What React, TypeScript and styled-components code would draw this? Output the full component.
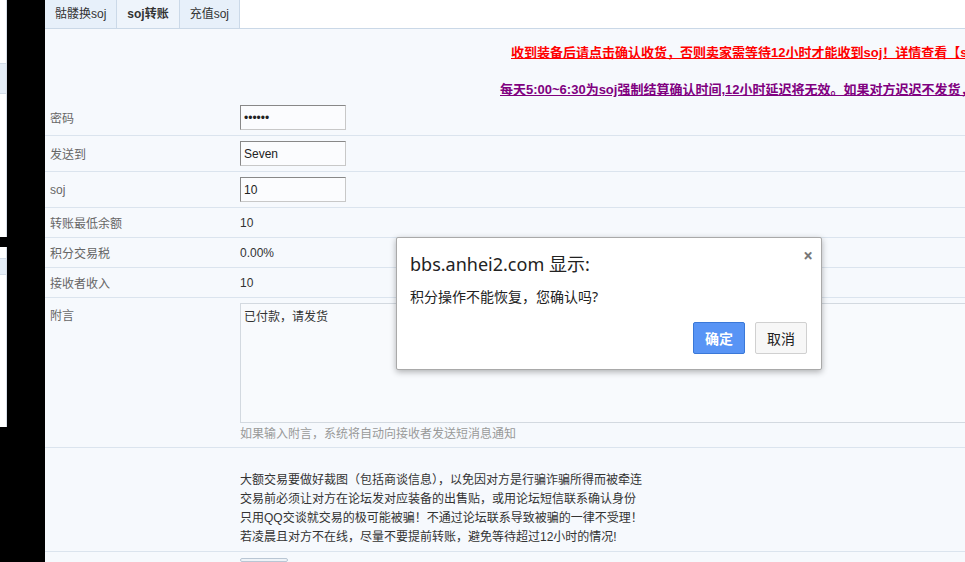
import React from 'react';
import styled, { createGlobalStyle } from 'styled-components';

const GlobalStyle = createGlobalStyle`
	html, body {
		margin: 0;
		padding: 0;
		background: #000;
	}
	body {
		font-family: 'Liberation Sans', 'Noto Sans CJK SC', sans-serif;
		font-size: 12px;
		color: #333;
	}
`;

const Page = styled.div`
	display: flex;
	width: 965px;
	height: 562px;
	overflow: hidden;
	background: #000;
`;

const SideStrip = styled.div`
	display: flex;
	flex-direction: column;
	gap: 10px;
	width: 45px;
	flex-shrink: 0;
	background: #000;
`;

const WindowSliver = styled.div<{ $h: number }>`
	display: flex;
	flex-direction: column;
	width: 7px;
	height: ${(p) => p.$h}px;
	background: #fff;
	border-right: 1px solid #d6dde6;
	box-sizing: border-box;
`;

const SliverBand = styled.div<{ $top: number; $h: number }>`
	margin-top: ${(p) => p.$top}px;
	height: ${(p) => p.$h}px;
	background: #e6eef7;
	border-top: 1px solid #d3dde8;
	border-bottom: 1px solid #d3dde8;
`;

const Main = styled.div`
	position: relative;
	flex: 1;
	display: flex;
	flex-direction: column;
	background: #f6f9fd;
	overflow: hidden;
`;

const TabBar = styled.div`
	display: flex;
	height: 28px;
	background: #fff;
	border-bottom: 1px solid #cad8e7;
	flex-shrink: 0;
`;

const Tab = styled.div<{ $active?: boolean }>`
	padding: 0 10px;
	line-height: 28px;
	background: ${(p) => (p.$active ? '#eef4fb' : '#e7f0fa')};
	border-right: 1px solid #cbd9e8;
	font-weight: ${(p) => (p.$active ? 'bold' : 'normal')};
	color: #333;
	white-space: nowrap;
`;

const NoticeArea = styled.div`
	display: flex;
	flex-direction: column;
	gap: 17px;
	padding-top: 14px;
	flex-shrink: 0;
`;

const Notice = styled.div<{ $color: string; $indent: number }>`
	height: 20px;
	line-height: 20px;
	padding-left: ${(p) => p.$indent}px;
	color: ${(p) => p.$color};
	font-size: 13px;
	font-weight: bold;
	text-decoration: underline;
	white-space: nowrap;
`;

const Row = styled.div<{ $h: number; $top?: boolean }>`
	display: flex;
	align-items: ${(p) => (p.$top ? 'flex-start' : 'center')};
	height: ${(p) => p.$h}px;
	border-bottom: 1px solid #dbe4ee;
	flex-shrink: 0;
	box-sizing: border-box;
`;

const Label = styled.div<{ $padTop?: number }>`
	width: 195px;
	padding-left: 5px;
	padding-top: ${(p) => p.$padTop ?? 0}px;
	box-sizing: border-box;
	color: #666;
	flex-shrink: 0;
`;

const Value = styled.div<{ $padTop?: number }>`
	display: flex;
	flex-direction: column;
	padding-top: ${(p) => p.$padTop ?? 0}px;
	color: #333;
`;

const TextInput = styled.input`
	width: 106px;
	height: 25px;
	box-sizing: border-box;
	padding: 0 3px;
	border: 1px solid #c8c8c8;
	border-top-color: #888;
	border-left-color: #888;
	background: #fbfcfe;
	font-family: 'Liberation Sans', sans-serif;
	font-size: 12px;
	color: #222;
	outline: none;
`;

const Memo = styled.textarea`
	width: 760px;
	height: 120px;
	box-sizing: border-box;
	padding: 3px;
	border: 1px solid #d3d9e0;
	background: #f8fafd;
	font-family: 'Liberation Sans', 'Noto Sans CJK SC', sans-serif;
	font-size: 12px;
	color: #333;
	resize: none;
	outline: none;
`;

const Hint = styled.div`
	margin-top: 2px;
	line-height: 18px;
	color: #999;
`;

const Warnings = styled.div`
	padding: 23px 0 0 195px;
	line-height: 19px;
	color: #333;
`;

const GhostButton = styled.div`
	margin: 6px 0 0 195px;
	width: 46px;
	height: 20px;
	border: 1px solid #b9c6d4;
	border-radius: 2px;
	background: #eef3f8;
`;

const Dialog = styled.div`
	position: absolute;
	left: 351px;
	top: 237px;
	width: 426px;
	height: 133px;
	box-sizing: border-box;
	background: #fff;
	border: 1px solid #a9a9a9;
	border-radius: 2px;
	box-shadow: 0 2px 6px rgba(0, 0, 0, 0.3);
	padding: 13px 14px 0 13px;
	display: flex;
	flex-direction: column;
	font-family: 'Noto Sans', 'Noto Sans CJK SC', sans-serif;
	color: #222;
`;

const DialogHead = styled.div`
	display: flex;
	justify-content: space-between;
	align-items: flex-start;
`;

const DialogTitle = styled.div`
	font-size: 18px;
	line-height: 24px;
	margin-top: 1px;
`;

const CloseMark = styled.div`
	font-size: 17px;
	line-height: 16px;
	color: #777;
	font-weight: bold;
	margin: -3px -6px 0 0;
`;

const DialogMsg = styled.div`
	margin-top: 11px;
	font-size: 14px;
	line-height: 20px;
`;

const DialogActions = styled.div`
	display: flex;
	justify-content: flex-end;
	gap: 10px;
	margin-top: 15px;
`;

const DialogButton = styled.button<{ $primary?: boolean }>`
	width: 52px;
	height: 32px;
	border-radius: 2px;
	border: 1px solid ${(p) => (p.$primary ? '#3a78d8' : '#d0d0d0')};
	background: ${(p) => (p.$primary ? '#5894f5' : '#f7f7f7')};
	color: ${(p) => (p.$primary ? '#fff' : '#222')};
	font-weight: ${(p) => (p.$primary ? 'bold' : 'normal')};
	font-family: 'Noto Sans CJK SC', sans-serif;
	font-size: 14px;
	padding: 0;
`;

const warnings = [
	'大额交易要做好裁图（包括商谈信息），以免因对方是行骗诈骗所得而被牵连',
	'交易前必须让对方在论坛发对应装备的出售贴，或用论坛短信联系确认身份',
	'只用QQ交谈就交易的极可能被骗！不通过论坛联系导致被骗的一律不受理！',
	'若凌晨且对方不在线，尽量不要提前转账，避免等待超过12小时的情况!',
];

export default function App() {
	return (
		<>
			<GlobalStyle />
			<Page>
				<SideStrip>
					<WindowSliver $h={237}>
						<SliverBand $top={63} $h={29} />
					</WindowSliver>
					<WindowSliver $h={180}>
						<SliverBand $top={11} $h={15} />
					</WindowSliver>
				</SideStrip>
				<Main>
					<TabBar>
						<Tab>骷髅换soj</Tab>
						<Tab $active>soj转账</Tab>
						<Tab>充值soj</Tab>
					</TabBar>
					<NoticeArea>
						<Notice $color="#ff0000" $indent={466}>
							收到装备后请点击确认收货，否则卖家需等待12小时才能收到soj！详情查看【soj交易说明】
						</Notice>
						<Notice $color="#800080" $indent={455}>
							每天5:00~6:30为soj强制结算确认时间,12小时延迟将无效。如果对方迟迟不发货，请联系管理员
						</Notice>
					</NoticeArea>
					<Row $h={36}>
						<Label>密码</Label>
						<Value>
							<TextInput type="password" defaultValue="123456" />
						</Value>
					</Row>
					<Row $h={36}>
						<Label>发送到</Label>
						<Value>
							<TextInput defaultValue="Seven" />
						</Value>
					</Row>
					<Row $h={36}>
						<Label>soj</Label>
						<Value>
							<TextInput defaultValue="10" />
						</Value>
					</Row>
					<Row $h={30}>
						<Label>转账最低余额</Label>
						<Value>10</Value>
					</Row>
					<Row $h={30}>
						<Label>积分交易税</Label>
						<Value>0.00%</Value>
					</Row>
					<Row $h={30}>
						<Label>接收者收入</Label>
						<Value>10</Value>
					</Row>
					<Row $h={150} $top>
						<Label $padTop={8}>附言</Label>
						<Value $padTop={5}>
							<Memo defaultValue="已付款，请发货" />
							<Hint>如果输入附言，系统将自动向接收者发送短消息通知</Hint>
						</Value>
					</Row>
					<Row $h={104} $top>
						<Warnings>
							{warnings.map((w) => (
								<div key={w}>{w}</div>
							))}
						</Warnings>
					</Row>
					<GhostButton />
					<Dialog>
						<DialogHead>
							<DialogTitle>bbs.anhei2.com 显示:</DialogTitle>
							<CloseMark>×</CloseMark>
						</DialogHead>
						<DialogMsg>积分操作不能恢复，您确认吗?</DialogMsg>
						<DialogActions>
							<DialogButton $primary>确定</DialogButton>
							<DialogButton>取消</DialogButton>
						</DialogActions>
					</Dialog>
				</Main>
			</Page>
		</>
	);
}
